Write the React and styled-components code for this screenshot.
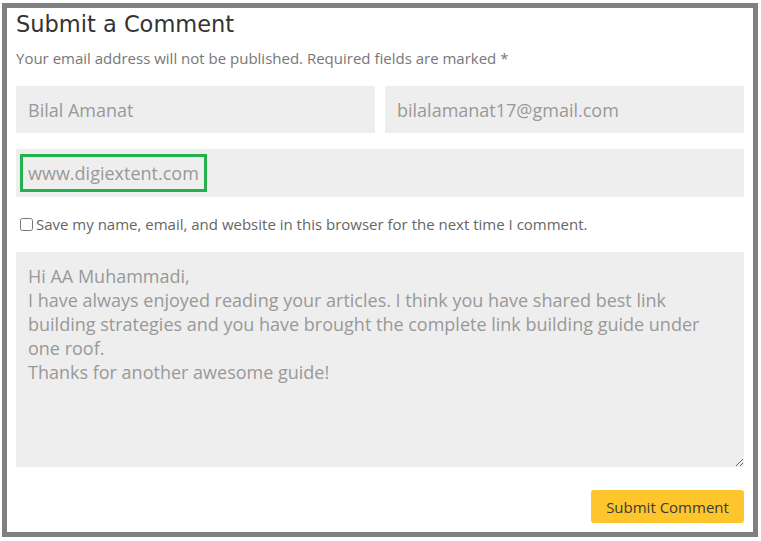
import styled, { createGlobalStyle } from 'styled-components';

const GlobalStyle = createGlobalStyle`
  body {
    margin: 0;
    background: #fff;
    font-family: "Open Sans", "Liberation Sans", sans-serif;
  }
`

const Frame = styled.section`
  box-sizing: border-box;
  width: 756px;
  height: 534px;
  margin: 3px 0 0 2px;
  padding: 2px 9px 0 9px;
  border: 5px solid #808080;
  display: flex;
  flex-direction: column;
`

const Title = styled.h2`
  margin: 0;
  font-family: "DejaVu Sans", "Liberation Sans", sans-serif;
  font-size: 22.5px;
  font-weight: 400;
  line-height: 28px;
  color: #333;
`

const Notice = styled.p`
  margin: 10px 0 0 0;
  font-size: 15px;
  line-height: 20px;
  color: #777;
`

const FieldRow = styled.div`
  margin-top: 18px;
  display: grid;
  grid-template-columns: 1fr 1fr;
  gap: 10px;
`

const Field = styled.input`
  box-sizing: border-box;
  height: 47px;
  width: 100%;
  padding: 0 12px;
  border: none;
  background: #eee;
  font-family: inherit;
  font-size: 18px;
  color: #999;
  outline: none;
`

const WebsiteField = styled.div`
  box-sizing: border-box;
  margin-top: 16px;
  height: 48px;
  padding: 0 4px;
  display: flex;
  align-items: center;
  background: #eee;
  font-size: 18px;
  color: #999;
`

const Highlight = styled.span`
  box-sizing: border-box;
  height: 38px;
  padding: 0 5px;
  display: flex;
  align-items: center;
  border: 3px solid #22b14c;
`

const SaveRow = styled.label`
  margin-top: 17px;
  display: flex;
  align-items: center;
  font-size: 15px;
  line-height: 20px;
  color: #666;

  & input {
    margin: 0 3px 0 4px;
    width: 13px;
    height: 13px;
  }
`

const Comment = styled.textarea`
  box-sizing: border-box;
  margin-top: 18px;
  height: 215px;
  width: 100%;
  padding: 12px;
  border: none;
  background: #eee;
  font-family: inherit;
  font-size: 18px;
  line-height: 24px;
  color: #999;
  outline: none;
`

const SubmitButton = styled.button`
  margin-top: 23px;
  align-self: flex-end;
  width: 153px;
  height: 33px;
  border: none;
  border-radius: 3px;
  background: #fec52c;
  font-family: inherit;
  font-size: 15px;
  color: #3a3a3a;
  cursor: pointer;
`

const commentText = `Hi AA Muhammadi,
I have always enjoyed reading your articles. I think you have shared best link
building strategies and you have brought the complete link building guide under
one roof.
Thanks for another awesome guide!`

export default function App() {
  return (
    <>
      <GlobalStyle />
      <Frame>
        <Title>Submit a Comment</Title>
        <Notice>Your email address will not be published. Required fields are marked *</Notice>
        <FieldRow>
          <Field defaultValue="Bilal Amanat" />
          <Field defaultValue="bilalamanat17@gmail.com" />
        </FieldRow>
        <WebsiteField>
          <Highlight>www.digiextent.com</Highlight>
        </WebsiteField>
        <SaveRow>
          <input type="checkbox" />
          Save my name, email, and website in this browser for the next time I comment.
        </SaveRow>
        <Comment defaultValue={commentText} />
        <SubmitButton type="submit">Submit Comment</SubmitButton>
      </Frame>
    </>
  );
}
